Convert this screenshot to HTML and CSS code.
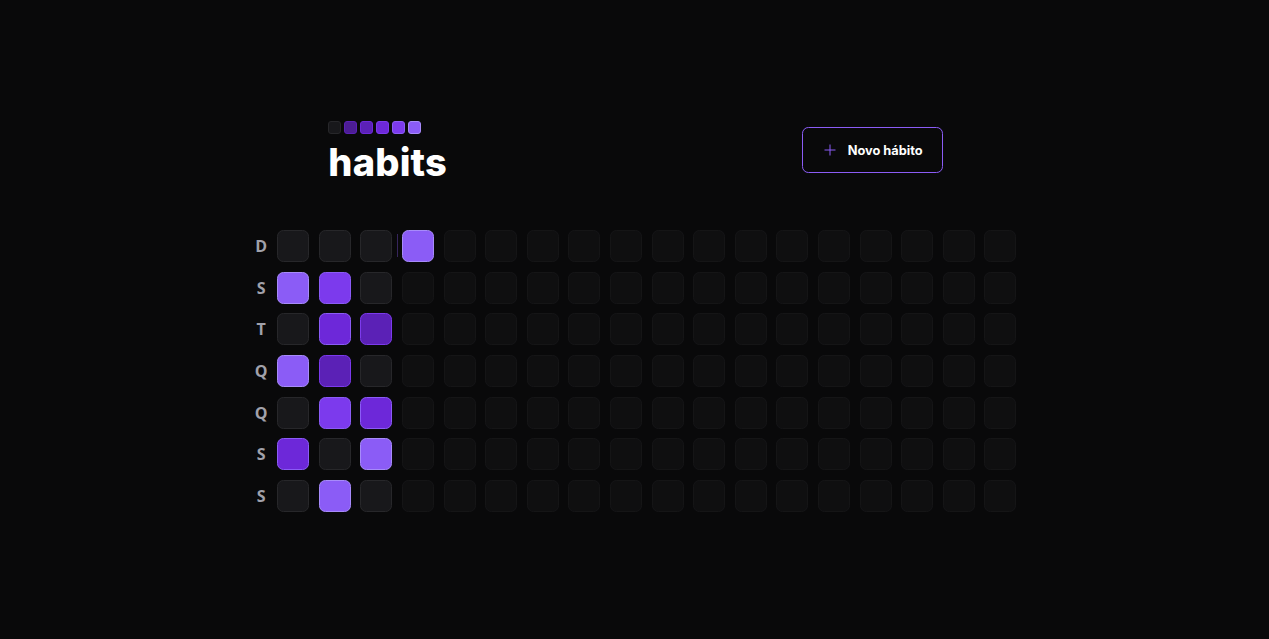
FILE: index.html
```html
<!DOCTYPE html>
<html lang="pt-BR">

<head>
    <meta charset="UTF-8">
    <meta name="viewport" content="width=device-width, initial-scale=1.0">
    <title>habits</title>
    <link rel="stylesheet" href="styles.css">
</head>

<body>
    <div class="container">
        <header class="header">
            <div class="logo">
                <div class="logo-squares">
                    <span class="sq sq-empty"></span>
                    <span class="sq sq-900"></span>
                    <span class="sq sq-800"></span>
                    <span class="sq sq-700"></span>
                    <span class="sq sq-600"></span>
                    <span class="sq sq-500"></span>
                </div>
                <div class="logo-text">habits</div>
            </div>

            <button type="button" class="new-habit">
                <svg class="plus" viewBox="0 0 256 256" width="16" height="16">
                    <line x1="40" y1="128" x2="216" y2="128" />
                    <line x1="128" y1="40" x2="128" y2="216" />
                </svg>
                Novo hábito
            </button>
        </header>

        <div class="summary">
            <div class="week-days">
                <div>D</div>
                <div>S</div>
                <div>T</div>
                <div>Q</div>
                <div>Q</div>
                <div>S</div>
                <div>S</div>
            </div>

            <div class="days">
                <!-- semana 1 -->
                <div class="day"></div>
                <div class="day p-500"></div>
                <div class="day"></div>
                <div class="day p-500"></div>
                <div class="day"></div>
                <div class="day p-700"></div>
                <div class="day"></div>
                <!-- semana 2 -->
                <div class="day"></div>
                <div class="day p-600"></div>
                <div class="day p-700"></div>
                <div class="day p-800"></div>
                <div class="day p-600"></div>
                <div class="day"></div>
                <div class="day p-500"></div>
                <!-- semana 3 -->
                <div class="day"></div>
                <div class="day"></div>
                <div class="day p-800"></div>
                <div class="day"></div>
                <div class="day p-700"></div>
                <div class="day p-500"></div>
                <div class="day"></div>
                <!-- hoje -->
                <div class="day p-500 today"></div>

                <!-- dias futuros -->
                <div class="day future"></div><div class="day future"></div><div class="day future"></div><div class="day future"></div><div class="day future"></div><div class="day future"></div>
                <div class="day future"></div><div class="day future"></div><div class="day future"></div><div class="day future"></div><div class="day future"></div><div class="day future"></div><div class="day future"></div>
                <div class="day future"></div><div class="day future"></div><div class="day future"></div><div class="day future"></div><div class="day future"></div><div class="day future"></div><div class="day future"></div>
                <div class="day future"></div><div class="day future"></div><div class="day future"></div><div class="day future"></div><div class="day future"></div><div class="day future"></div><div class="day future"></div>
                <div class="day future"></div><div class="day future"></div><div class="day future"></div><div class="day future"></div><div class="day future"></div><div class="day future"></div><div class="day future"></div>
                <div class="day future"></div><div class="day future"></div><div class="day future"></div><div class="day future"></div><div class="day future"></div><div class="day future"></div><div class="day future"></div>
                <div class="day future"></div><div class="day future"></div><div class="day future"></div><div class="day future"></div><div class="day future"></div><div class="day future"></div><div class="day future"></div>
                <div class="day future"></div><div class="day future"></div><div class="day future"></div><div class="day future"></div><div class="day future"></div><div class="day future"></div><div class="day future"></div>
                <div class="day future"></div><div class="day future"></div><div class="day future"></div><div class="day future"></div><div class="day future"></div><div class="day future"></div><div class="day future"></div>
                <div class="day future"></div><div class="day future"></div><div class="day future"></div><div class="day future"></div><div class="day future"></div><div class="day future"></div><div class="day future"></div>
                <div class="day future"></div><div class="day future"></div><div class="day future"></div><div class="day future"></div><div class="day future"></div><div class="day future"></div><div class="day future"></div>
                <div class="day future"></div><div class="day future"></div><div class="day future"></div><div class="day future"></div><div class="day future"></div><div class="day future"></div><div class="day future"></div>
                <div class="day future"></div><div class="day future"></div><div class="day future"></div><div class="day future"></div><div class="day future"></div><div class="day future"></div><div class="day future"></div>
                <div class="day future"></div><div class="day future"></div><div class="day future"></div><div class="day future"></div><div class="day future"></div><div class="day future"></div><div class="day future"></div>
                <div class="day future"></div><div class="day future"></div><div class="day future"></div><div class="day future"></div><div class="day future"></div><div class="day future"></div><div class="day future"></div>
            </div>
        </div>
    </div>
</body>

</html>
```

FILE: styles.css
```css
body {
    margin: 0;
    padding: 0;
    background-color: #09090a;
    color: #fff;
    font-family: Inter, "Noto Sans", sans-serif;
}

.container {
    width: 819px;
    box-sizing: border-box;
    margin: 0 auto;
    padding: 121px 18.2px 0 20.2px;
    display: flex;
    flex-direction: column;
    gap: 51.2px;
}

/* header */
.header {
    width: 614.4px;
    margin: 0 auto;
    display: flex;
    align-items: center;
    justify-content: space-between;
    height: 58px;
}

.logo {
    display: flex;
    flex-direction: column;
    align-self: flex-start;
}

.logo-squares {
    display: flex;
    gap: 3px;
}

.sq {
    width: 13px;
    height: 13px;
    box-sizing: border-box;
    border-radius: 3px;
    border: 1px solid;
}

.sq-empty { background-color: #18181b; border-color: #27272a; }
.sq-900 { background-color: #4c1d95; border-color: #5b21b6; }
.sq-800 { background-color: #5b21b6; border-color: #6d28d9; }
.sq-700 { background-color: #6d28d9; border-color: #7c3aed; }
.sq-600 { background-color: #7c3aed; border-color: #8b5cf6; }
.sq-500 { background-color: #8b5cf6; border-color: #a78bfa; }

.logo-text {
    font-size: 38px;
    line-height: 38px;
    font-weight: 800;
    letter-spacing: 0.2px;
    margin-top: 9px;
    margin-left: 0;
}

.new-habit {
    display: flex;
    align-items: center;
    gap: 9.6px;
    height: 46px;
    padding: 0 19px;
    box-sizing: border-box;
    background: transparent;
    border: 1.6px solid #8b5cf6;
    border-radius: 6.4px;
    color: #fff;
    font-family: Inter, "Noto Sans", sans-serif;
    font-weight: 700;
    font-size: 12.8px;
    cursor: pointer;
}

.plus line {
    stroke: #8b5cf6;
    stroke-width: 16;
}

/* summary */
.summary {
    display: flex;
}

.week-days {
    display: grid;
    grid-template-rows: repeat(7, 32px);
    gap: 9.6px;
}

.week-days div {
    width: 32px;
    height: 32px;
    display: flex;
    align-items: center;
    justify-content: center;
    color: #a1a1aa;
    font-family: "Open Sans", sans-serif;
    font-weight: 700;
    font-size: 16px;
}

.days {
    display: grid;
    grid-template-rows: repeat(7, 32px);
    grid-auto-flow: column;
    grid-auto-columns: 32px;
    gap: 9.6px;
}

.day {
    box-sizing: border-box;
    width: 32px;
    height: 32px;
    border-radius: 6.4px;
    border: 1.6px solid #27272a;
    background-color: #18181b;
}

.day.future {
    opacity: 0.4;
}

.day.p-800 { background-color: #5b21b6; border-color: #7c3aed; }
.day.p-700 { background-color: #6d28d9; border-color: #8b5cf6; }
.day.p-600 { background-color: #7c3aed; border-color: #8b5cf6; }
.day.p-500 { background-color: #8b5cf6; border-color: #a78bfa; }

.day.today {
    position: relative;
}

.day.today::before {
    content: "";
    position: absolute;
    left: -6px;
    top: 3px;
    width: 1px;
    height: 23px;
    background-color: rgba(139, 92, 246, 0.35);
}
```
